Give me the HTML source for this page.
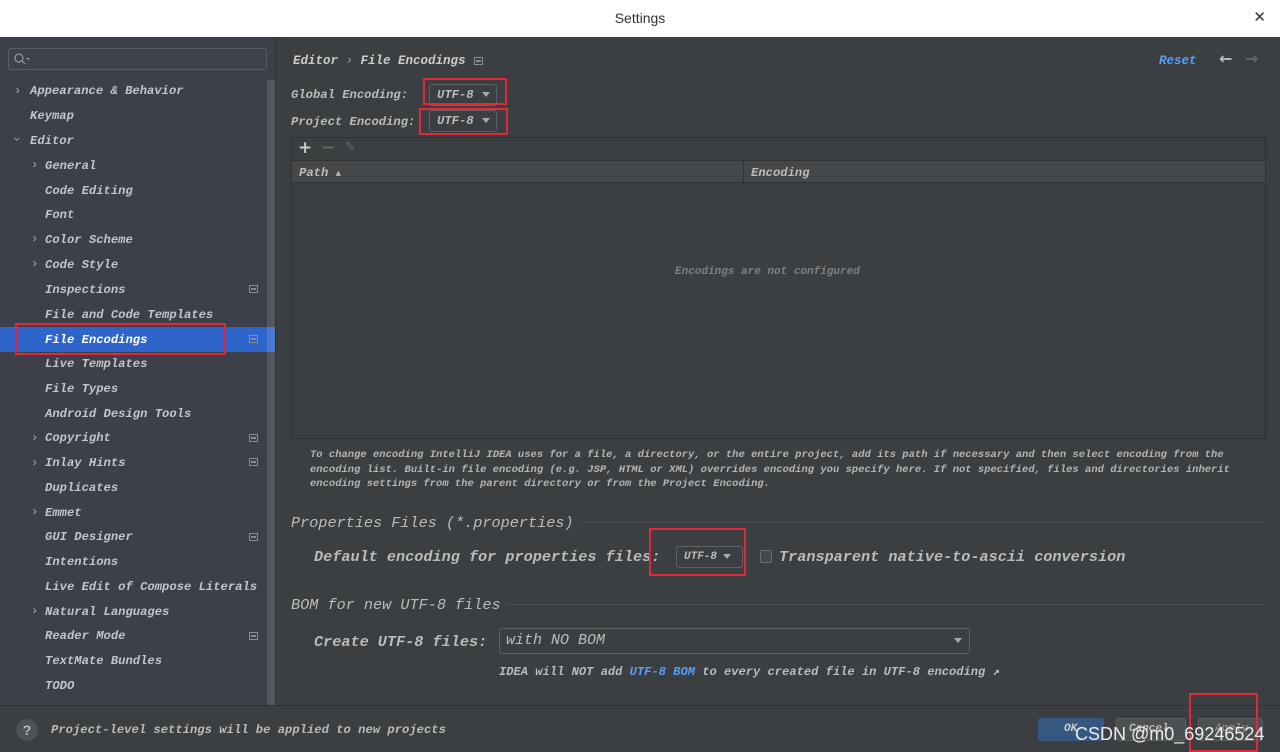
<!DOCTYPE html>
<html><head><meta charset="utf-8"><style>
*{margin:0;padding:0;box-sizing:border-box}
body{width:1280px;height:752px;overflow:hidden;background:#3c3f41;font-family:"Liberation Mono",monospace;font-style:italic;font-weight:bold;color:#bbbbbb;position:relative;font-size:12.2px}
.a{position:absolute;white-space:nowrap}
#title{left:0;top:0;width:1280px;height:37px;background:#fff;color:#333;font-family:"Liberation Sans",sans-serif;font-style:normal;font-weight:normal;font-size:14px;text-align:center;line-height:37px}
#side{left:0;top:37px;width:276px;height:668px;background:#3d4049;border-right:1px solid #2f3133}
.it{position:absolute;height:25px;line-height:25px;font-size:12.2px;color:#c3c5ca;margin-top:1px}
.ch{position:absolute;color:#aaa;font-style:normal;font-weight:normal;margin-top:1px}
.ic{position:absolute;left:249px;width:9px;height:8px;border:1px solid #8a8d93;}
.ic:after{content:"";position:absolute;left:1px;top:2px;width:5px;height:2px;background:#8a8d93}
.red{position:absolute;border:2px solid #e3283c}
.dd{position:absolute;border:1px solid #5e6163;border-radius:3px;background:#3c3f41;height:22px;line-height:20px;padding-left:7px}
.tri{display:inline-block;width:0;height:0;border-left:4px solid transparent;border-right:4px solid transparent;border-top:5px solid #aaa;vertical-align:middle;margin-left:8px}
</style></head><body>
<div class="a" id="title">Settings</div>
<div class="a" style="right:14px;top:8px;font-family:'DejaVu Sans';font-style:normal;font-weight:normal;color:#333;font-size:15px">✕</div>
<div class="a" id="side"></div>
<div class="a" style="left:8px;top:48px;width:259px;height:22px;border:1px solid #5a5d63;border-radius:3px;background:#3f424a"></div>
<svg class="a" style="left:13px;top:52px" width="18" height="14"><circle cx="6" cy="6" r="4" stroke="#999" fill="none" stroke-width="1.2"/><line x1="9" y1="9" x2="12" y2="12" stroke="#999" stroke-width="1.2"/><path d="M13 6l2 2 2-2" fill="#999"/></svg>
<div class="a" style="left:267px;top:80px;width:8px;height:625px;background:#54575d"></div>
<div class="a" style="left:0;top:327px;width:267px;height:25px;background:#2f65ca"></div>
<div class="a" style="left:267px;top:327px;width:8px;height:25px;background:#4a78d0"></div>
<div class="it" style="left:30px;top:78px">Appearance &amp; Behavior</div><div class="ch" style="left:14px;top:83px">›</div>
<div class="it" style="left:30px;top:103px">Keymap</div>
<div class="it" style="left:30px;top:128px">Editor</div><div class="ch" style="left:13px;top:131px;transform:rotate(90deg)">›</div>
<div class="it" style="left:45px;top:153px">General</div><div class="ch" style="left:31px;top:157px">›</div>
<div class="it" style="left:45px;top:178px">Code Editing</div>
<div class="it" style="left:45px;top:202px">Font</div>
<div class="it" style="left:45px;top:227px">Color Scheme</div><div class="ch" style="left:31px;top:231px">›</div>
<div class="it" style="left:45px;top:252px">Code Style</div><div class="ch" style="left:31px;top:256px">›</div>
<div class="it" style="left:45px;top:277px">Inspections</div><div class="ic" style="top:285px"></div>
<div class="it" style="left:45px;top:302px">File and Code Templates</div>
<div class="it" style="left:45px;top:327px;color:#fff">File Encodings</div><div class="ic" style="top:335px"></div>
<div class="it" style="left:45px;top:351px">Live Templates</div>
<div class="it" style="left:45px;top:376px">File Types</div>
<div class="it" style="left:45px;top:401px">Android Design Tools</div>
<div class="it" style="left:45px;top:425px">Copyright</div><div class="ch" style="left:31px;top:430px">›</div><div class="ic" style="top:434px"></div>
<div class="it" style="left:45px;top:450px">Inlay Hints</div><div class="ch" style="left:31px;top:455px">›</div><div class="ic" style="top:458px"></div>
<div class="it" style="left:45px;top:475px">Duplicates</div>
<div class="it" style="left:45px;top:500px">Emmet</div><div class="ch" style="left:31px;top:504px">›</div>
<div class="it" style="left:45px;top:524px">GUI Designer</div><div class="ic" style="top:533px"></div>
<div class="it" style="left:45px;top:549px">Intentions</div>
<div class="it" style="left:45px;top:574px">Live Edit of Compose Literals</div>
<div class="it" style="left:45px;top:599px">Natural Languages</div><div class="ch" style="left:31px;top:603px">›</div>
<div class="it" style="left:45px;top:623px">Reader Mode</div><div class="ic" style="top:632px"></div>
<div class="it" style="left:45px;top:648px">TextMate Bundles</div>
<div class="it" style="left:45px;top:673px">TODO</div>
<div class="red" style="left:15px;top:323px;width:211px;height:32px"></div>

<div class="a" style="left:293px;top:54px;font-size:12.5px;color:#ccc">Editor <span style="font-weight:normal;color:#999">›</span> File Encodings</div>
<div class="ic" style="left:474px;top:57px"></div>
<div class="a" style="left:1159px;top:54px;color:#589df6;font-size:12.5px">Reset</div>
<div class="a" style="left:1219px;top:49px;color:#bbb;font-style:normal;font-size:16px;font-family:'DejaVu Sans'">←</div>
<div class="a" style="left:1245px;top:49px;color:#666;font-style:normal;font-size:16px;font-family:'DejaVu Sans'">→</div>

<div class="a" style="left:291px;top:88px">Global Encoding:</div>
<div class="dd" style="left:429px;top:84px;width:68px">UTF-8<span class="tri"></span></div>
<div class="red" style="left:423px;top:78px;width:84px;height:27px"></div>
<div class="a" style="left:291px;top:115px">Project Encoding:</div>
<div class="dd" style="left:429px;top:110px;width:68px">UTF-8<span class="tri"></span></div>
<div class="red" style="left:419px;top:108px;width:89px;height:27px"></div>

<div class="a" style="left:291px;top:137px;width:975px;height:302px;border:1px solid #2f3133;background:#3c3f41"></div>
<div class="a" style="left:292px;top:138px;width:973px;height:23px;border-bottom:1px solid #323232"></div>
<div class="a" style="left:298px;top:138px;font-style:normal;font-size:17px;color:#ccc;font-family:'DejaVu Sans'">+</div>
<div class="a" style="left:321px;top:138px;font-style:normal;font-size:17px;color:#666;font-family:'DejaVu Sans'">−</div>
<div class="a" style="left:345px;top:140px;font-style:normal;font-size:13px;color:#666;font-family:'DejaVu Sans'">✎</div>
<div class="a" style="left:292px;top:161px;width:973px;height:22px;background:#45484a;border-bottom:1px solid #333"></div>
<div class="a" style="left:743px;top:161px;width:1px;height:22px;background:#333"></div>
<div class="a" style="left:299px;top:166px">Path <span style="font-style:normal;font-size:9px">▲</span></div>
<div class="a" style="left:751px;top:166px">Encoding</div>
<div class="a" style="left:675px;top:266px;color:#808080;font-size:11px">Encodings are not configured</div>

<div class="a" style="left:310px;top:448px;font-size:10.5px;line-height:14.7px;color:#b4b4b4">To change encoding IntelliJ IDEA uses for a file, a directory, or the entire project, add its path if necessary and then select encoding from the<br>encoding list. Built-in file encoding (e.g. JSP, HTML or XML) overrides encoding you specify here. If not specified, files and directories inherit<br>encoding settings from the parent directory or from the Project Encoding.</div>

<div class="a" style="left:291px;top:514px;font-size:15.2px;font-weight:normal">Properties Files (*.properties)</div>
<div class="a" style="left:582px;top:522px;width:683px;height:1px;background:#4d5052"></div>
<div class="a" style="left:314px;top:548px;font-size:15.2px">Default encoding for properties files:</div>
<div class="dd" style="left:676px;top:546px;width:67px;font-size:11px">UTF-8<span class="tri" style="margin-left:6px"></span></div>
<div class="red" style="left:649px;top:528px;width:97px;height:48px"></div>
<div class="a" style="left:760px;top:550px;width:12px;height:13px;border:1px solid #6b6e70;border-radius:2px;background:#43494a"></div>
<div class="a" style="left:779px;top:548px;font-size:15.2px">Transparent native-to-ascii conversion</div>

<div class="a" style="left:291px;top:596px;font-size:15.2px;font-weight:normal">BOM for new UTF-8 files</div>
<div class="a" style="left:508px;top:604px;width:757px;height:1px;background:#4d5052"></div>
<div class="a" style="left:314px;top:633px;font-size:15.2px">Create UTF-8 files:</div>
<div class="dd" style="left:499px;top:628px;width:471px;height:26px;line-height:24px;font-size:15px;font-weight:normal;padding-left:6px">with NO BOM</div>
<div class="a" style="left:954px;top:638px;border-left:4px solid transparent;border-right:4px solid transparent;border-top:5px solid #aaa"></div>
<div class="a" style="left:499px;top:664px;font-size:12.1px">IDEA will NOT add <span style="color:#589df6">UTF-8 BOM</span> to every created file in UTF-8 encoding ↗</div>

<div class="a" style="left:0;top:705px;width:1280px;height:47px;background:#3c3f41;border-top:1px solid #2f3133"></div>
<div class="a" style="left:16px;top:719px;width:22px;height:22px;border-radius:50%;background:#4e5254;color:#bbb;text-align:center;line-height:22px;font-style:normal;font-family:'Liberation Sans';font-size:14px">?</div>
<div class="a" style="left:51px;top:723px">Project-level settings will be applied to new projects</div>
<div class="a" style="left:1038px;top:718px;width:66px;height:23px;background:#365880;border-radius:3px;color:#ccc;font-size:11px;line-height:23px;padding-left:26px">OK</div>
<div class="a" style="left:1116px;top:718px;width:70px;height:23px;background:#4c5052;border:1px solid #5e6060;border-radius:3px;color:#bbb;font-size:11px;line-height:21px;padding-left:12px">Cancel</div>
<div class="a" style="left:1198px;top:718px;width:65px;height:23px;background:#4c5052;border:1px solid #5e6060;border-radius:3px;color:#888;font-size:11px;line-height:21px;padding-left:16px">Apply</div>
<div class="red" style="left:1189px;top:693px;width:69px;height:59px"></div>
<div class="a" style="left:1075px;top:724px;font-family:'Liberation Sans',sans-serif;font-style:normal;font-weight:normal;font-size:18px;color:#ececec">CSDN @m0_69246524</div>
</body></html>
